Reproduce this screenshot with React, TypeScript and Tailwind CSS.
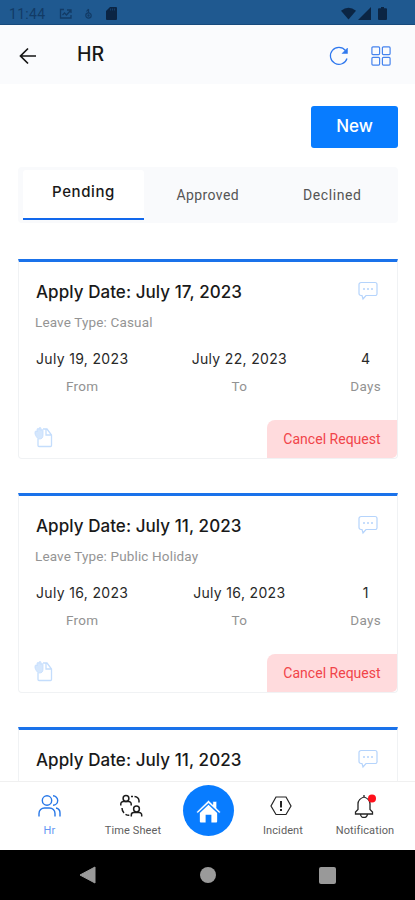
import React from 'react';

interface LeaveRequest {
  id: number;
  applyDate: string;
  details?: {
    leaveType: string;
    from: string;
    to: string;
    days: number;
  };
}

const requests: LeaveRequest[] = [
  {
    id: 1,
    applyDate: 'July 17, 2023',
    details: {
      leaveType: 'Casual',
      from: 'July 19, 2023',
      to: 'July 22, 2023',
      days: 4,
    },
  },
  {
    id: 2,
    applyDate: 'July 11, 2023',
    details: {
      leaveType: 'Public Holiday',
      from: 'July 16, 2023',
      to: 'July 16, 2023',
      days: 1,
    },
  },
  {
    id: 3,
    applyDate: 'July 11, 2023',
  },
];

function StatusBar() {
  return (
    <div className="flex h-[25px] shrink-0 items-center justify-between border-b border-[#174a7c] bg-[#1f5990] pt-[3px] pr-[28px] pl-[9px] text-[#0b2544]">
      <div className="flex items-center">
        <span className="w-[50px] text-[14px] leading-none tracking-[0.3px] text-[#123b66]">
          11:44
        </span>
        <svg width="13" height="12" viewBox="0 0 13 12" fill="none" stroke="#123b66" strokeWidth="1.3">
          <path d="M5 1.5H1.500v8.500H12V7M3.500 7l2-2 2 2 4.500-5M8 2h4v3" />
        </svg>
        <svg className="ml-[12px]" width="9" height="12" viewBox="0 0 9 12" fill="none" stroke="#123b66" strokeWidth="1.2">
          <path d="M4.500 1v4M2.500 3.500 4.500 1" />
          <circle cx="4.500" cy="7.500" r="2.700" />
          <circle cx="4.500" cy="7.500" r="0.600" />
        </svg>
        <svg className="ml-[13px]" width="11" height="13" viewBox="0 0 11 13" fill="currentColor">
          <path d="M4 0h6a1 1 0 0 1 1 1v11a1 1 0 0 1-1 1H1a1 1 0 0 1-1-1V4z" />
          <path d="M4.500 1.500v2M6.500 1.500v2M8.500 1.500v2" stroke="#1f5990" strokeWidth="0.500" />
        </svg>
      </div>
      <div className="flex items-center">
        <svg width="15" height="13" viewBox="0 0 16 13" fill="currentColor">
          <path d="M0 3.500Q8-3 16 3.500L8 13z" />
        </svg>
        <svg className="ml-[2px]" width="13" height="13" viewBox="0 0 13 13" fill="currentColor">
          <path d="M13 0v13H0z" />
        </svg>
        <svg className="ml-[7px]" width="9" height="13" viewBox="0 0 9 13" fill="currentColor">
          <path d="M3 0h3v1.300h2a1 1 0 0 1 1 1V12a1 1 0 0 1-1 1H1a1 1 0 0 1-1-1V2.300a1 1 0 0 1 1-1h2z" />
        </svg>
      </div>
    </div>
  );
}

function Header() {
  return (
    <header className="flex h-[59px] shrink-0 items-center bg-[#fafbfd] pr-[24px] pl-[19px]">
      <svg className="mt-[2px]" width="18" height="18" viewBox="0 0 18 18" fill="none" stroke="#151515" strokeWidth="1.700">
        <path d="M17 9H2M9 1.500 1.500 9 9 16.500" />
      </svg>
      <h1 className="ml-[40px] font-[Inter] text-[19.5px] leading-none font-medium text-[#171717]">
        HR
      </h1>
      <svg className="mt-[2px] ml-auto" width="20" height="20" viewBox="0 0 20 20" fill="none" stroke="#2f78ee" strokeWidth="1.200">
        <path d="M18 12.500A8.500 8.500 0 1 1 16.500 4.500" />
        <path d="M18.500 2v5.500h-5.500z" fill="#2f78ee" strokeWidth="0.500" />
      </svg>
      <svg className="mt-[2px] ml-[22px]" width="20" height="20" viewBox="0 0 20 20" fill="none" stroke="#4684ee" strokeWidth="1.200">
        <rect x="0.900" y="0.900" width="7.700" height="7.700" rx="1" />
        <rect x="11.400" y="0.900" width="7.700" height="7.700" rx="1" />
        <rect x="0.900" y="11.400" width="7.700" height="7.700" rx="1" />
        <rect x="11.400" y="11.400" width="7.700" height="7.700" rx="1" />
      </svg>
    </header>
  );
}

function Tabs() {
  return (
    <div className="mt-[19px] flex h-[56px] shrink-0 rounded-[4px] bg-[#f9fafc] px-[5px] py-[3px] text-[14px] text-[#555]">
      <button
        type="button"
        className="w-[121px] rounded-t-[3px] border-b-2 border-[#1268ec] bg-white pb-[3px] font-[Inter] text-[15px] font-medium tracking-[0.6px] text-[#191919]"
      >
        Pending
      </button>
      <button type="button" className="flex-1 pl-[3px] tracking-[0.4px]">
        Approved
      </button>
      <button type="button" className="flex-1 pl-[3px] tracking-[0.6px]">
        Declined
      </button>
    </div>
  );
}

function ChatIcon() {
  return (
    <svg className="mt-px" width="20" height="20" viewBox="0 0 20 20" fill="none" stroke="#b5d4fc" strokeWidth="1.200">
      <path d="M3 1.500h14a2 2 0 0 1 2 2v8.500a2 2 0 0 1-2 2.500H8l-3 3.500-1-3.500H3a2 2 0 0 1-2-2v-9a2 2 0 0 1 2-2z" />
      <path d="M5 8h2M9 8h2M13 8h2" strokeWidth="1.500" />
    </svg>
  );
}

function AttachmentIcon() {
  return (
    <svg width="19" height="21" viewBox="0 0 19 21" fill="none" stroke="#c4ddfc" strokeWidth="1.300">
      <path d="M9 2h4l4.500 6v10.500a1 1 0 0 1-1 1H5a1 1 0 0 1-1-1V12M12 2.500v5.500h5" />
      <path
        d="M1 7V5a1 1 0 0 1 2 0V2.500a1 1 0 0 1 2 0v-1a1 1 0 0 1 2 0v2a1 1 0 0 1 2 0V8c0 3-1.500 4-3.500 4S2.500 10.500 1 7z"
        fill="#d5e7fd"
        strokeWidth="0.800"
      />
    </svg>
  );
}

interface DateCellProps {
  value: string | number;
  label: string;
}

function DateCell({ value, label }: DateCellProps) {
  return (
    <div className="flex flex-col items-center">
      <span className="font-[Inter] text-[14px] leading-[20px] tracking-[0.33px] text-[#282828]">
        {value}
      </span>
      <span className="mt-[7px] text-[13.5px] leading-[20px] tracking-[0.3px] text-[#929292]">
        {label}
      </span>
    </div>
  );
}

function RequestCard({ request }: { request: LeaveRequest }) {
  const { applyDate, details } = request;

  return (
    <li className="flex h-[200px] shrink-0 flex-col rounded-b-[4px] border border-t-[3px] border-[#f0f2f4] border-t-[#1a72ea] bg-white">
      <div className="flex h-[59px] shrink-0 items-start justify-between pt-[18px] pr-[19px] pl-[17px]">
        <h2 className="font-[Inter] text-[17px] leading-[24px] font-medium tracking-[0.06px] text-[#191919]">
          Apply Date: {applyDate}
        </h2>
        <ChatIcon />
      </div>
      {details ? (
        <>
          <p className="-mt-[9px] pl-[16px] text-[13.5px] leading-[20px] tracking-[0.15px] text-[#949494]">
            Leave Type: {details.leaveType}
          </p>
          <div className="mt-[17px] flex justify-between pr-[16px] pl-[17px]">
            <DateCell value={details.from} label="From" />
            <DateCell value={details.to} label="To" />
            <DateCell value={details.days} label="Days" />
          </div>
          <div className="mt-auto flex h-[38px] justify-between pl-[15px]">
            <div className="pt-[7px]">
              <AttachmentIcon />
            </div>
            <button
              type="button"
              className="w-[130px] rounded-tl-[8px] rounded-br-[5px] bg-[#ffdbdd] pt-[1px] text-[14px] tracking-[0.02px] text-[#f14449]"
            >
              Cancel Request
            </button>
          </div>
        </>
      ) : null}
    </li>
  );
}

function PeopleIcon() {
  return (
    <svg width="24" height="24" viewBox="0 0 24 24" fill="none" stroke="#2878e8" strokeWidth="1.400">
      <circle cx="9" cy="6.500" r="4.700" />
      <path d="M1 22.500v-3A5.500 5.500 0 0 1 6.500 14h5a5.500 5.500 0 0 1 5.500 5.500v3M15 1.800a4.700 4.700 0 0 1 0 9.400M18 14a5 5 0 0 1 4 5v3.500" />
    </svg>
  );
}

function TimeSheetIcon() {
  return (
    <svg className="-translate-x-[2px]" width="24" height="24" viewBox="0 0 24 24" fill="none" stroke="#1d1d1d" strokeWidth="1.500">
      <circle cx="7" cy="4.500" r="2.900" />
      <path d="M1.800 11.500V10A2.500 2.500 0 0 1 4.300 7.500h5.400a2.500 2.500 0 0 1 2.500 2.500v1.500" />
      <circle cx="17.500" cy="15" r="2.900" />
      <path d="M12.300 22.500V21a2.500 2.500 0 0 1 2.500-2.500h5.400a2.500 2.500 0 0 1 2.500 2.500v1.500" />
      <path d="M12 2.500h2M15.500 2.500q4 .5 4.500 4v2M3 14q0 3 2 5M6.500 20.300q2 1.200 3.800 1" />
    </svg>
  );
}

function IncidentIcon() {
  return (
    <svg className="-translate-x-[2px]" width="24" height="24" viewBox="0 0 24 24" fill="none" stroke="#242424" strokeWidth="1.200">
      <path d="M7 3h10l5 9-5 8.500H7L2 12z" />
      <path d="M12 7v6.500M12 15v2" strokeWidth="2" />
    </svg>
  );
}

function BellIcon() {
  return (
    <svg className="-translate-x-px" width="24" height="24" viewBox="0 0 24 24" fill="none" stroke="#242424" strokeWidth="1.300">
      <path d="M12 1v2M3.500 20h17v-2L18 15.500V10c0-3-2.500-6-6-7-3.500 1-6 4-6 7v5.500L3.500 18zM8.500 20a3.500 3.500 0 0 0 7 0" />
      <circle cx="20" cy="4.500" r="4" fill="#ff101b" stroke="none" />
    </svg>
  );
}

interface NavItemProps {
  label: string;
  icon: React.ReactNode;
  active?: boolean;
}

function NavItem({ label, icon, active }: NavItemProps) {
  return (
    <button type="button" className="flex flex-col items-center pt-[12px]">
      {icon}
      <span
        className={`mt-[6px] text-[11px] leading-[13px] tracking-[0.1px] whitespace-nowrap ${
          active ? 'text-[#6597f3]' : 'text-[#606060]'
        }`}
      >
        {label}
      </span>
    </button>
  );
}

function BottomNav() {
  return (
    <nav className="grid h-[69px] shrink-0 grid-cols-[99px_68px_82px_68px_96px] items-start border-t border-[#f0f0f0] bg-white">
      <NavItem label="Hr" icon={<PeopleIcon />} active />
      <NavItem label="Time Sheet" icon={<TimeSheetIcon />} />
      <button
        type="button"
        className="mt-[3px] flex h-[51px] w-[51px] items-center justify-center justify-self-center rounded-full bg-[#087cff]"
      >
        <svg width="25" height="24" viewBox="0 0 26 24">
          <path
            d="M4 14 13 5.500l9 8.500v9a1 1 0 0 1-1 1h-5v-8h-6v8H5a1 1 0 0 1-1-1z"
            fill="white"
          />
          <path
            d="M.5 13 13 .800l4.500 4.400V2h4v7.100l4 3.900-1.300 1.400L13 4 1.800 14.400z"
            fill="white"
            stroke="#087cff"
            strokeWidth="0.600"
          />
        </svg>
      </button>
      <NavItem label="Incident" icon={<IncidentIcon />} />
      <NavItem label="Notification" icon={<BellIcon />} />
    </nav>
  );
}

function SystemNav() {
  return (
    <div className="flex h-[50px] shrink-0 items-center bg-black pl-[79px]">
      <svg width="17" height="18" viewBox="0 0 17 18" fill="#999">
        <path d="M16 1v16L1 9z" stroke="#999" strokeLinejoin="round" />
      </svg>
      <div className="ml-[104px] h-4 w-4 rounded-full bg-[#9a9a9a]" />
      <div className="ml-[103px] h-[17px] w-[17px] rounded-[2px] bg-[#999]" />
    </div>
  );
}

export default function App() {
  return (
    <div className="flex h-[900px] w-[415px] flex-col overflow-hidden bg-white font-[Roboto]">
      <StatusBar />
      <Header />
      <main className="flex min-h-0 flex-1 flex-col overflow-hidden pr-[17px] pl-[18px]">
        <button
          type="button"
          className="mt-[22px] h-[42px] w-[87px] shrink-0 self-end rounded-[3px] bg-[#087cff] font-[Inter] text-[17px] font-medium text-white"
        >
          New
        </button>
        <Tabs />
        <ul className="mt-[36px] flex flex-col gap-[34px]">
          {requests.map((request) => (
            <RequestCard key={request.id} request={request} />
          ))}
        </ul>
      </main>
      <BottomNav />
      <SystemNav />
    </div>
  );
}
